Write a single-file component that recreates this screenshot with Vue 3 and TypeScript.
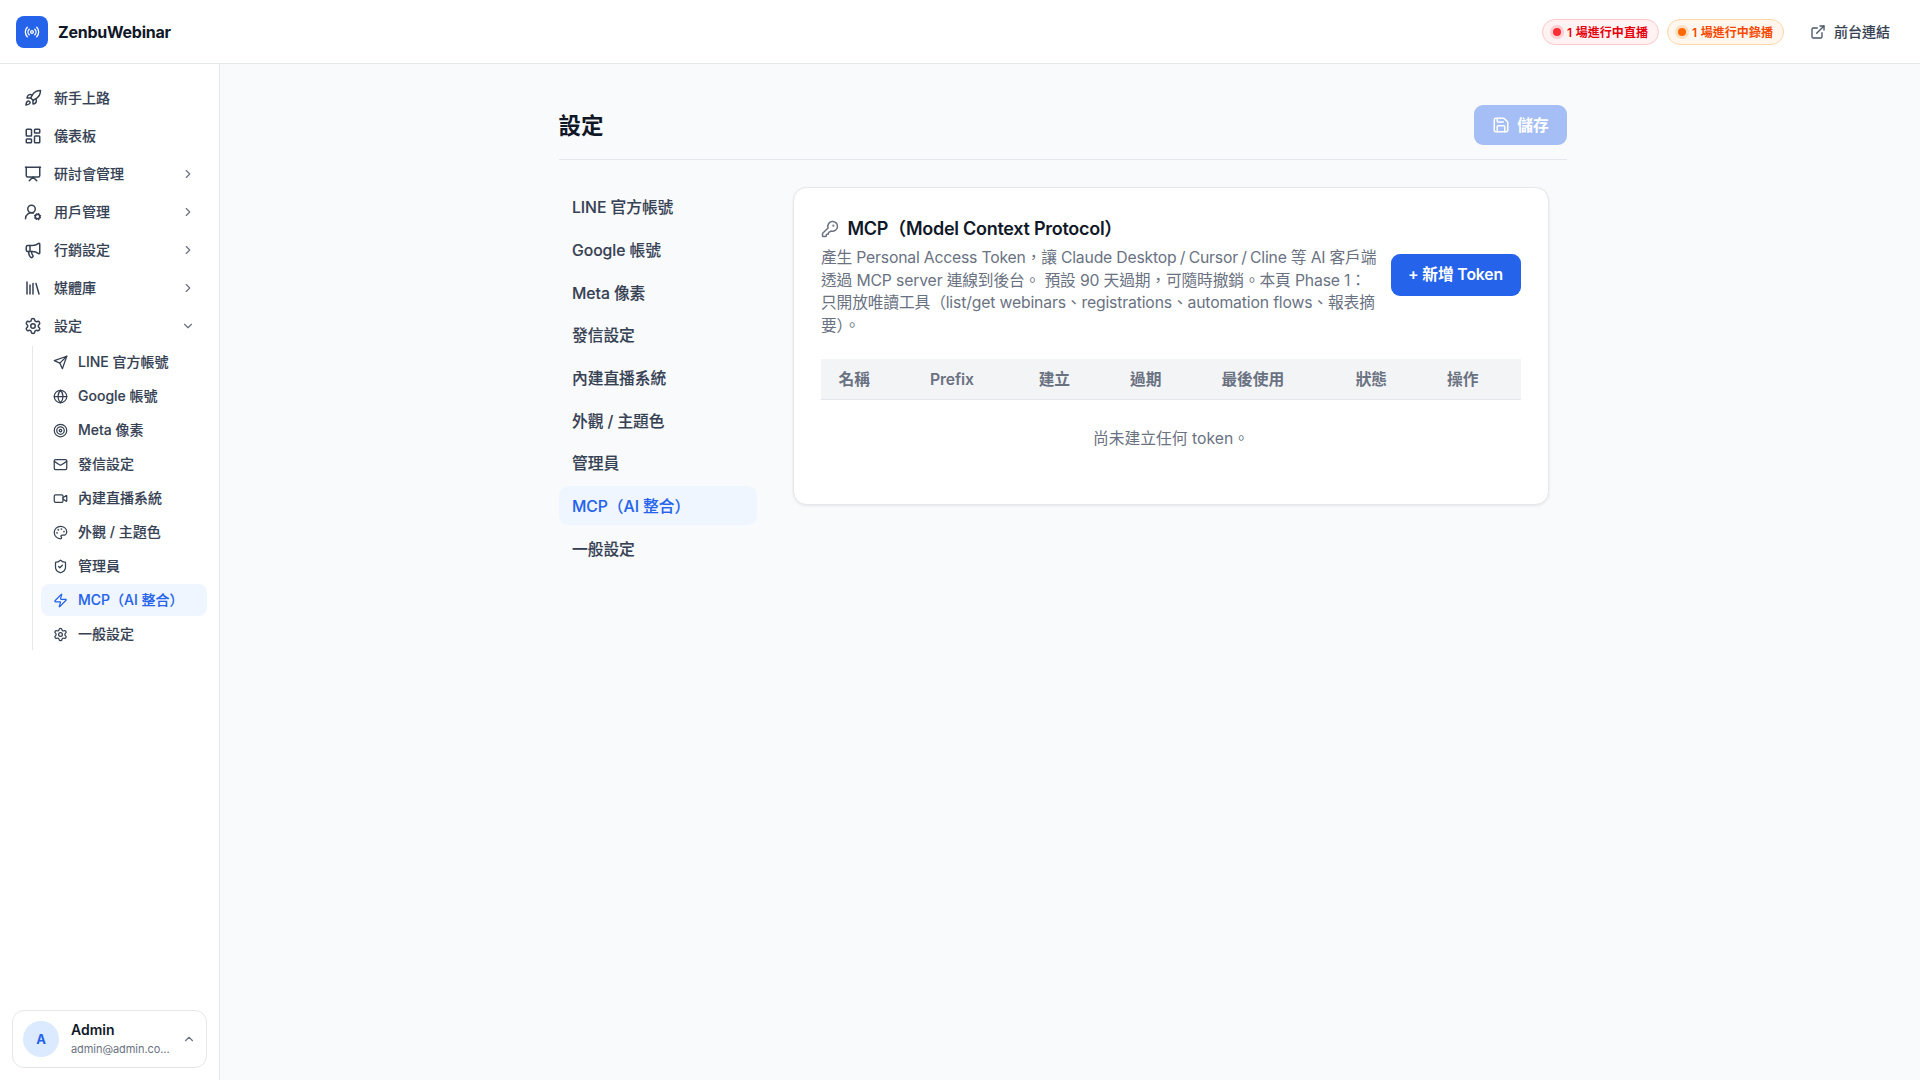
<script setup lang="ts">
interface Item {
  label: string
  icon: string
  chevron?: 'right' | 'down'
}

const gear =
  '<path d="M9.671 4.136a2.34 2.34 0 0 1 4.659 0 2.34 2.34 0 0 0 3.319 1.915 2.34 2.34 0 0 1 2.33 4.033 2.34 2.34 0 0 0 0 3.831 2.34 2.34 0 0 1-2.33 4.033 2.34 2.34 0 0 0-3.319 1.915 2.34 2.34 0 0 1-4.659 0 2.34 2.34 0 0 0-3.32-1.915 2.34 2.34 0 0 1-2.33-4.033 2.34 2.34 0 0 0 0-3.831A2.34 2.34 0 0 1 6.35 6.051a2.34 2.34 0 0 0 3.319-1.915"/><circle cx="12" cy="12" r="3"/>'

const icons: Record<string, string> = {
  gear,
  radio:
    '<path d="M16.247 7.761a6 6 0 0 1 0 8.478M19.075 4.933a10 10 0 0 1 0 14.134M4.925 19.067a10 10 0 0 1 0-14.134M7.753 16.239a6 6 0 0 1 0-8.478"/><circle cx="12" cy="12" r="2"/>',
  rocket:
    '<path d="M4.5 16.5c-1.5 1.26-2 5-2 5s3.74-.5 5-2c.71-.84.7-2.13-.09-2.91a2.18 2.18 0 0 0-2.91-.09z"/><path d="m12 15-3-3a22 22 0 0 1 2-3.95A12.88 12.88 0 0 1 22 2c0 2.72-.78 7.5-6 11a22.35 22.35 0 0 1-4 2z"/><path d="M9 12H4s.55-3.03 2-4c1.62-1.08 5 0 5 0"/><path d="M12 15v5s3.03-.55 4-2c1.08-1.62 0-5 0-5"/>',
  dashboard:
    '<rect width="7" height="9" x="3" y="3" rx="1"/><rect width="7" height="5" x="14" y="3" rx="1"/><rect width="7" height="9" x="14" y="12" rx="1"/><rect width="7" height="5" x="3" y="16" rx="1"/>',
  presentation:
    '<path d="M2 3h20"/><path d="M21 3v11a2 2 0 0 1-2 2H5a2 2 0 0 1-2-2V3"/><path d="m7 21 5-5 5 5"/>',
  userCog:
    '<path d="M2 21a8 8 0 0 1 10.434-7.62"/><circle cx="10" cy="8" r="5"/><circle cx="18" cy="18" r="3"/><path d="m19.5 14.3-.4.9m-2.2 5.6-.4.9m5.2-2.2-.9-.3m-5.6-2.3-.9-.3m.2 3.4.9-.4m5.6-2.2.9-.4m-2.2 5.2-.4-.9m-2.2-5.6-.4-.9"/>',
  megaphone:
    '<path d="M11 6a13 13 0 0 0 8.4-2.8A1 1 0 0 1 21 4v12a1 1 0 0 1-1.6.8A13 13 0 0 0 11 14H5a2 2 0 0 1-2-2V8a2 2 0 0 1 2-2z"/><path d="M6 14a12 12 0 0 0 2.4 7.2 2 2 0 0 0 3.2-2.4A8 8 0 0 1 10 14"/><path d="M8 6v8"/>',
  library: '<path d="m16 6 4 14"/><path d="M12 6v14"/><path d="M8 8v12"/><path d="M4 4v16"/>',
  send:
    '<path d="m22 2-7 20-4-9-9-4Z"/><path d="M22 2 11 13"/>',
  globe:
    '<circle cx="12" cy="12" r="10"/><path d="M12 2a14.5 14.5 0 0 0 0 20 14.5 14.5 0 0 0 0-20"/><path d="M2 12h20"/>',
  target: '<circle cx="12" cy="12" r="10"/><circle cx="12" cy="12" r="6"/><circle cx="12" cy="12" r="2"/>',
  mail: '<rect width="20" height="16" x="2" y="4" rx="2"/><path d="m22 7-8.97 5.7a1.94 1.94 0 0 1-2.06 0L2 7"/>',
  video:
    '<path d="m16 13 5.223 3.482a.5.5 0 0 0 .777-.416V7.87a.5.5 0 0 0-.752-.432L16 10.5"/><rect x="2" y="6" width="14" height="12" rx="2"/>',
  palette:
    '<path d="M12 2C6.5 2 2 6.5 2 12s4.500 10 10 10c.926 0 1.648-.746 1.648-1.688 0-.437-.18-.835-.437-1.125-.29-.289-.438-.652-.438-1.125a1.640 1.640 0 0 1 1.668-1.668h1.996c3.051 0 5.555-2.503 5.555-5.554C21.965 6.012 17.461 2 12 2z"/><circle cx="13.500" cy="6.500" r=".5" fill="currentColor"/><circle cx="17.500" cy="10.500" r=".5" fill="currentColor"/><circle cx="8.500" cy="7.500" r=".5" fill="currentColor"/><circle cx="6.500" cy="12.500" r=".5" fill="currentColor"/>',
  shield:
    '<path d="M20 13c0 5-3.500 7.500-7.660 8.950a1 1 0 0 1-.67-.01C7.500 20.500 4 18 4 13V6a1 1 0 0 1 1-1c2 0 4.500-1.200 6.240-2.720a1.170 1.170 0 0 1 1.520 0C14.510 3.810 17 5 19 5a1 1 0 0 1 1 1z"/><path d="m9 12 2 2 4-4"/>',
  zap:
    '<path d="M4 14a1 1 0 0 1-.78-1.630l9.900-10.200a.5.5 0 0 1 .86.460l-1.920 6.020A1 1 0 0 0 13 10h7a1 1 0 0 1 .78 1.630l-9.900 10.200a.5.5 0 0 1-.86-.460l1.920-6.020A1 1 0 0 0 11 14z"/>',
  external:
    '<path d="M15 3h6v6"/><path d="M10 14 21 3"/><path d="M18 13v6a2 2 0 0 1-2 2H5a2 2 0 0 1-2-2V8a2 2 0 0 1 2-2h6"/>',
  save:
    '<path d="M15.200 3a2 2 0 0 1 1.400.6l3.800 3.800a2 2 0 0 1 .6 1.400V19a2 2 0 0 1-2 2H5a2 2 0 0 1-2-2V5a2 2 0 0 1 2-2z"/><path d="M17 21v-7a1 1 0 0 0-1-1H8a1 1 0 0 0-1 1v7"/><path d="M7 3v4a1 1 0 0 0 1 1h7"/>',
  key:
    '<path d="M2.586 17.414A2 2 0 0 0 2 18.828V21a1 1 0 0 0 1 1h3a1 1 0 0 0 1-1v-1a1 1 0 0 1 1-1h1a1 1 0 0 0 1-1v-1a1 1 0 0 1 1-1h.172a2 2 0 0 0 1.414-.586l.814-.814a6.500 6.500 0 1 0-4-4z"/><circle cx="16.500" cy="7.500" r=".5" fill="currentColor"/>',
  right: '<path d="m9 18 6-6-6-6"/>',
  down: '<path d="m6 9 6 6 6-6"/>',
  up: '<path d="m18 15-6-6-6 6"/>',
}

const mainItems: Item[] = [
  { label: '新手上路', icon: 'rocket' },
  { label: '儀表板', icon: 'dashboard' },
  { label: '研討會管理', icon: 'presentation', chevron: 'right' },
  { label: '用戶管理', icon: 'userCog', chevron: 'right' },
  { label: '行銷設定', icon: 'megaphone', chevron: 'right' },
  { label: '媒體庫', icon: 'library', chevron: 'right' },
  { label: '設定', icon: 'gear', chevron: 'down' },
]

const settings: Item[] = [
  { label: 'LINE 官方帳號', icon: 'send' },
  { label: 'Google 帳號', icon: 'globe' },
  { label: 'Meta 像素', icon: 'target' },
  { label: '發信設定', icon: 'mail' },
  { label: '內建直播系統', icon: 'video' },
  { label: '外觀 / 主題色', icon: 'palette' },
  { label: '管理員', icon: 'shield' },
  { label: 'MCP（AI 整合）', icon: 'zap' },
  { label: '一般設定', icon: 'gear' },
]
const active = 7

const columns = ['名稱', 'Prefix', '建立', '過期', '最後使用', '狀態', '操作']
</script>

<template>
  <div class="app">
    <header class="topbar">
      <div class="logo"><svg class="ic s16" viewBox="0 0 24 24" v-html="icons.radio" /></div>
      <span class="brand">ZenbuWebinar</span>
      <div class="top-right">
        <span class="badge red"><i class="dot" /><span>1 場進行中直播</span></span>
        <span class="badge orange"><i class="dot" /><span>1 場進行中錄播</span></span>
        <a class="front"><svg class="ic s16" viewBox="0 0 24 24" v-html="icons.external" /><span class="label">前台連結</span></a>
      </div>
    </header>

    <div class="body">
      <aside class="sidebar">
        <nav class="nav">
          <a v-for="item in mainItems" :key="item.label" class="nav-item">
            <svg class="ic s18" viewBox="0 0 24 24" v-html="icons[item.icon]" />
            <span class="grow label">{{ item.label }}</span>
            <svg v-if="item.chevron" class="ic s14 muted" viewBox="0 0 24 24" v-html="icons[item.chevron]" />
          </a>
          <div class="sub">
            <a v-for="(item, i) in settings" :key="item.label" class="sub-item" :class="{ active: i === active }">
              <svg class="ic s15" viewBox="0 0 24 24" v-html="icons[item.icon]" />
              <span class="label">{{ item.label }}</span>
            </a>
          </div>
        </nav>
        <div class="user">
          <div class="avatar">A</div>
          <div class="who">
            <div class="name">Admin</div>
            <div class="email">admin@admin.co...</div>
          </div>
          <svg class="ic s14 muted" viewBox="0 0 24 24" v-html="icons.up" />
        </div>
      </aside>

      <main class="main">
        <div class="container">
          <div class="page-head">
            <h1>設定</h1>
            <button class="btn save"><svg class="ic s18" viewBox="0 0 24 24" v-html="icons.save" /><span>儲存</span></button>
          </div>
          <div class="columns">
            <nav class="tabs">
              <a v-for="(item, i) in settings" :key="item.label" class="tab" :class="{ active: i === active }">{{ item.label }}</a>
            </nav>
            <section class="card">
              <div class="card-head">
                <div class="intro">
                  <h2><svg class="ic s18 muted" viewBox="0 0 24 24" v-html="icons.key" /><span>MCP（Model Context Protocol）</span></h2>
                  <p>
                    <span class="line first">產生 Personal Access Token，讓 Claude Desktop<span class="slash"> / </span>Cursor<span class="slash"> / </span>Cline 等 AI 客戶端</span>
                    <span class="line">透過 MCP server 連線到後台。 預設 90 天過期，可隨時撤銷。本頁 Phase 1：</span>
                    <span class="line">只開放唯讀工具（list/get webinars、registrations、automation flows、報表摘</span>
                    <span class="line">要）。</span>
                  </p>
                </div>
                <button class="btn add">+ 新增 Token</button>
              </div>
              <table>
                <thead>
                  <tr><th v-for="c in columns" :key="c">{{ c }}</th></tr>
                </thead>
                <tbody>
                  <tr><td colspan="7">尚未建立任何 token。</td></tr>
                </tbody>
              </table>
            </section>
          </div>
        </div>
      </main>
    </div>
  </div>
</template>

<style>
body {
  margin: 0;
  overflow: hidden;
}
</style>

<style scoped>
* {
  box-sizing: border-box;
}
.app {
  height: 100vh;
  display: flex;
  flex-direction: column;
  font-family: Inter, 'Noto Sans CJK TC', sans-serif;
  font-size: 14px;
  color: #101828;
  background: #f9fafc;
}
.ic {
  flex: none;
  display: block;
  fill: none;
  stroke: currentColor;
  stroke-width: 2;
  stroke-linecap: round;
  stroke-linejoin: round;
}
.s14 { width: 14px; height: 14px; }
.s15 { width: 15px; height: 15px; }
.s16 { width: 16px; height: 16px; }
.s18 { width: 18px; height: 18px; }
.muted { color: #6a7282; }
.grow { flex: 1; }
.label {
  padding-bottom: 2px;
  -webkit-text-stroke: 0.12px currentColor;
}

.topbar {
  flex: none;
  height: 64px;
  padding: 0 30px 0 16px;
  display: flex;
  align-items: center;
  background: #fff;
  border-bottom: 1px solid #e5e7eb;
}
.logo {
  width: 32px;
  height: 32px;
  border-radius: 8px;
  background: #2563eb;
  color: #fff;
  display: flex;
  align-items: center;
  justify-content: center;
}
.brand {
  margin-left: 10px;
  font-size: 16px;
  font-weight: 700;
  letter-spacing: -0.24px;
}
.top-right {
  margin-left: auto;
  display: flex;
  align-items: center;
  gap: 8px;
}
.badge {
  width: 117px;
  height: 26px;
  padding: 0 10px;
  display: flex;
  align-items: center;
  gap: 6px;
  border: 1px solid;
  border-radius: 13px;
  font-size: 12px;
  font-weight: 600;
  letter-spacing: 0.05px;
  word-spacing: 0.5px;
  white-space: nowrap;
}
.badge span { padding-bottom: 1px; }
.dot {
  width: 8px;
  height: 8px;
  border-radius: 50%;
}
.red { color: #e7000b; background: #fef2f2; border-color: #ffc9c9; }
.red .dot { background: #fb2c36; box-shadow: 0 0 0 3px #fecdd0; }
.orange { color: #f54900; background: #fff7ed; border-color: #ffd6a7; }
.orange .dot { background: #ff6900; box-shadow: 0 0 0 3px #ffdfc4; }
.front {
  margin-left: 18px;
  display: flex;
  align-items: center;
  gap: 8px;
  font-weight: 500;
  color: #364153;
}
.front .ic { color: #4a5565; }

.body {
  flex: 1;
  min-height: 0;
  display: flex;
}
.sidebar {
  flex: none;
  width: 220px;
  padding: 16px 12px 12px;
  display: flex;
  flex-direction: column;
  justify-content: space-between;
  background: #fff;
  border-right: 1px solid #e5e7eb;
}
.nav {
  display: flex;
  flex-direction: column;
  gap: 2px;
}
.nav-item {
  height: 36px;
  padding: 0 12px;
  display: flex;
  align-items: center;
  gap: 12px;
  font-weight: 500;
  color: #364153;
}
.sub {
  margin-left: 20px;
  padding-left: 8px;
  border-left: 1px solid #e5e7eb;
  display: flex;
  flex-direction: column;
  gap: 2px;
}
.sub-item {
  height: 32px;
  padding: 0 12px;
  display: flex;
  align-items: center;
  gap: 10px;
  border-radius: 8px;
  font-weight: 500;
  color: #364153;
  white-space: nowrap;
}
.active {
  background: #eff6ff;
  color: #2563eb;
}
.user {
  height: 58px;
  padding: 0 10px;
  display: flex;
  align-items: center;
  border: 1px solid #e5e7eb;
  border-radius: 12px;
}
.avatar {
  flex: none;
  width: 36px;
  height: 36px;
  border-radius: 50%;
  background: #dbeafe;
  color: #2563eb;
  font-size: 13px;
  font-weight: 700;
  display: flex;
  align-items: center;
  justify-content: center;
}
.who {
  width: 99px;
  margin: -1px 12px 0;
}
.name {
  font-weight: 600;
  line-height: 20px;
}
.email {
  font-size: 11px;
  line-height: 18px;
  letter-spacing: -0.06px;
  color: #6a7282;
  white-space: nowrap;
}

.main {
  flex: 1;
  padding: 41px 14px 0 0;
}
.container {
  width: 1008px;
  margin: 0 auto;
}
.page-head {
  height: 55px;
  display: flex;
  align-items: flex-start;
  justify-content: space-between;
  border-bottom: 1px solid #e5e7eb;
}
h1 {
  margin: 0 0 0 -0.5px;
  font-size: 22.5px;
  line-height: 41px;
  font-weight: 700;
}
.btn {
  border: 0;
  border-radius: 9px;
  background: #2563eb;
  color: #fff;
  font: 600 15.75px Inter, 'Noto Sans CJK TC', sans-serif;
  white-space: nowrap;
}
.save {
  width: 93px;
  height: 40px;
  padding: 0 0 1px;
  display: flex;
  align-items: center;
  justify-content: center;
  gap: 7px;
  background: #a5bef5;
}
.columns {
  margin-top: 27px;
  display: flex;
  align-items: flex-start;
}
.tabs {
  width: 198px;
  display: flex;
  flex-direction: column;
  gap: 3.3px;
}
.tab {
  height: 39.4px;
  padding-left: 13px;
  display: flex;
  align-items: center;
  border-radius: 9px;
  font-size: 15.75px;
  font-weight: 500;
  letter-spacing: -0.06px;
  color: #364153;
  -webkit-text-stroke: 0.12px currentColor;
}
.tab.active { color: #2563eb; }
.card {
  width: 756px;
  height: 318px;
  margin-left: 36px;
  padding: 27px;
  background: #fff;
  border: 1px solid #e5e7eb;
  border-radius: 13.5px;
  box-shadow: 0 1px 3px rgba(0, 0, 0, 0.08);
}
.card-head {
  display: flex;
  align-items: center;
  justify-content: space-between;
}
h2 {
  margin: 0;
  display: flex;
  align-items: center;
  gap: 8.5px;
  font-size: 18px;
  line-height: 27px;
  font-weight: 600;
  letter-spacing: -0.27px;
  white-space: nowrap;
}
.intro { width: 556px; }
p {
  margin: 5px 0 -0.5px;
  font-size: 15.75px;
  line-height: 22.5px;
  color: #6a7282;
  white-space: nowrap;
}
.line {
  display: block;
  letter-spacing: -0.16px;
}
.line.first { letter-spacing: -0.2px; }
.slash { word-spacing: -0.9px; }
.add {
  width: 130px;
  height: 42px;
  padding: 0 1px 3px 0;
  margin-top: -1px;
  letter-spacing: -0.12px;
}
table {
  width: 100%;
  margin-top: 22.5px;
  border-collapse: separate;
  border-spacing: 0;
  font-size: 15.75px;
  line-height: 22.5px;
  color: #6a7282;
}
th {
  height: 41px;
  padding: 2px 18px 0 17.5px;
  text-align: left;
  font-weight: 600;
  letter-spacing: -0.1px;
  background: #f3f4f6;
  border-bottom: 1px solid #e5e7eb;
  white-space: nowrap;
}
td {
  padding: 28px 18px;
  text-align: center;
}
</style>
